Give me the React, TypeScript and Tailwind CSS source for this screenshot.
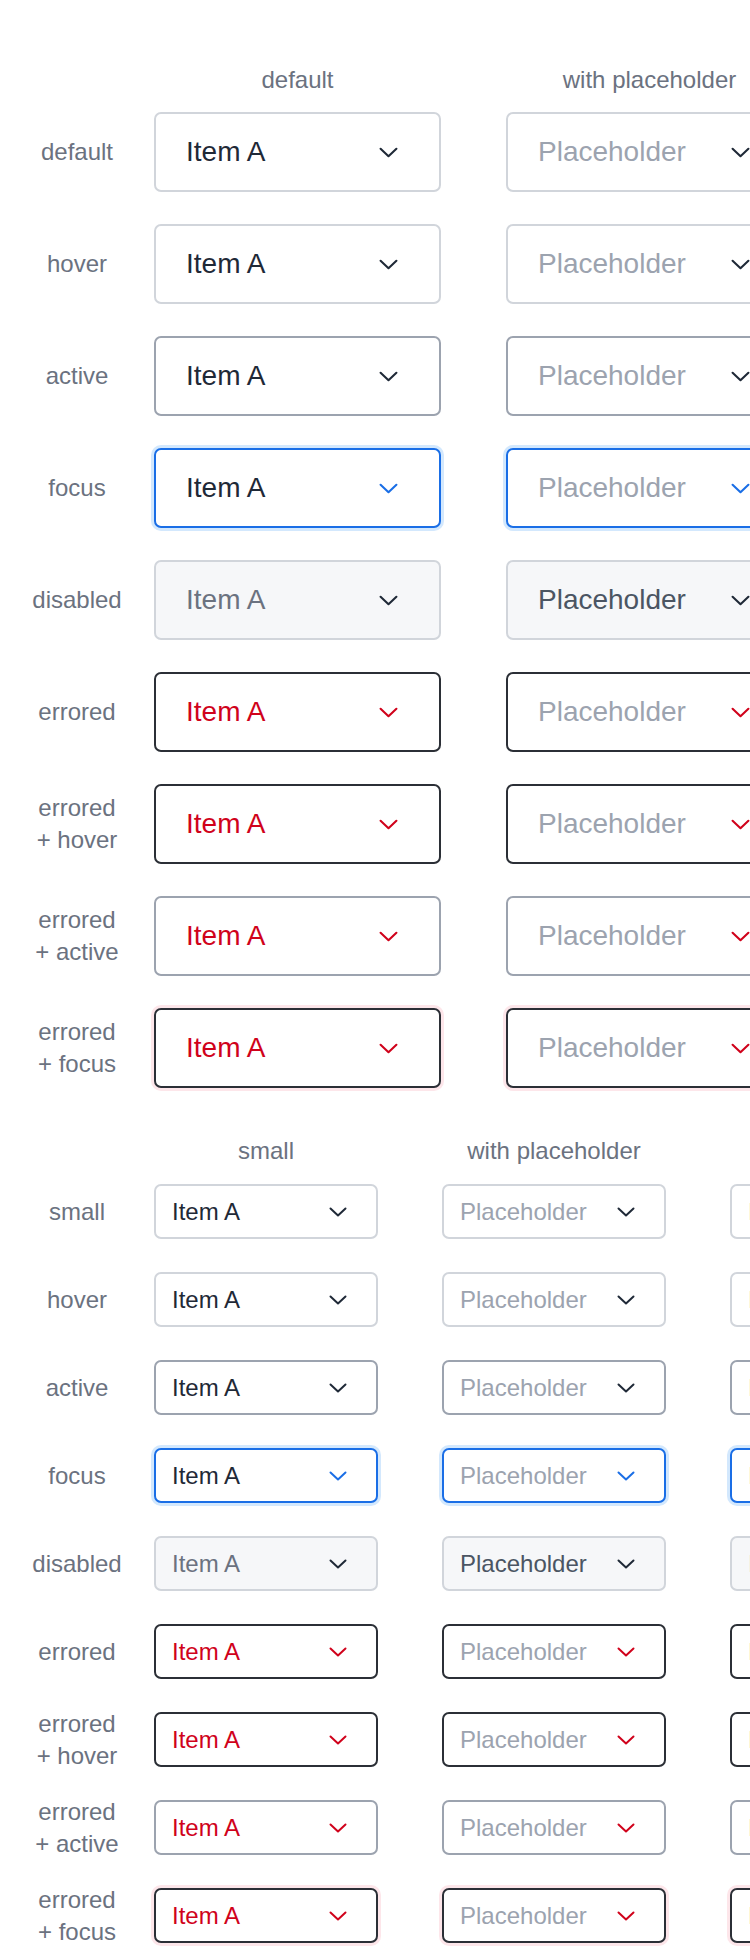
import React from "react";

type State =
  | "default"
  | "hover"
  | "active"
  | "focus"
  | "disabled"
  | "errored"
  | "errored-hover"
  | "errored-active"
  | "errored-focus";

const states: { state: State; label: string }[] = [
  { state: "default", label: "default" },
  { state: "hover", label: "hover" },
  { state: "active", label: "active" },
  { state: "focus", label: "focus" },
  { state: "disabled", label: "disabled" },
  { state: "errored", label: "errored" },
  { state: "errored-hover", label: "errored + hover" },
  { state: "errored-active", label: "errored + active" },
  { state: "errored-focus", label: "errored + focus" },
];

function boxClass(state: State) {
  switch (state) {
    case "active":
      return "border-[#9ca3af] bg-white";
    case "focus":
      return "border-[#1a6ee6] bg-white shadow-[0_0_0_3px_#d3e8fd]";
    case "disabled":
      return "border-[#d1d5db] bg-[#f6f7f9]";
    case "errored":
    case "errored-hover":
      return "border-[#2b2f36] bg-white";
    case "errored-active":
      return "border-[#9ca3af] bg-white";
    case "errored-focus":
      return "border-[#2b2f36] bg-white shadow-[0_0_0_3px_#fde6ea]";
    default:
      return "border-[#d1d5db] bg-white";
  }
}

function textClass(state: State, placeholder: boolean) {
  if (state === "disabled") return placeholder ? "text-[#4b5563]" : "text-[#6b7280]";
  if (placeholder) return "text-[#9ca3af]";
  if (state.startsWith("errored")) return "text-[#d0021b]";
  return "text-[#1f2937]";
}

function chevronColor(state: State) {
  if (state === "focus") return "#1a6ee6";
  if (state.startsWith("errored")) return "#d0021b";
  return "#1f2937";
}

function Chevron({ color, small }: { color: string; small?: boolean }) {
  return (
    <svg
      width={small ? 18 : 19}
      height={small ? 10 : 11}
      viewBox="0 0 18 10"
      fill="none"
      className="shrink-0"
    >
      <polyline
        points="1.5,1.5 9,8.5 16.5,1.5"
        stroke={color}
        strokeWidth="2"
        strokeLinecap="round"
        strokeLinejoin="round"
      />
    </svg>
  );
}

function SelectBox({
  state,
  placeholder,
  small,
}: {
  state: State;
  placeholder?: boolean;
  small?: boolean;
}) {
  return (
    <div
      className={
        "flex shrink-0 items-center justify-between rounded-[7px] border-2 " +
        boxClass(state) +
        (small
          ? " h-[55px] w-[224px] pl-[16px] pr-[29px]"
          : " h-[80px] w-[287px] pl-[30px] pr-[41px]")
      }
    >
      <span
        className={
          textClass(state, !!placeholder) +
          (small ? " text-[24px]" : " text-[28px]") +
          " whitespace-nowrap leading-none"
        }
      >
        {placeholder ? "Placeholder" : "Item A"}
      </span>
      <Chevron color={chevronColor(state)} small={small} />
    </div>
  );
}

function Section({
  small,
  headers,
  cols,
  firstLabel,
}: {
  small?: boolean;
  headers: string[];
  cols: boolean[];
  firstLabel: string;
}) {
  const w = small ? "w-[224px]" : "w-[287px]";
  return (
    <div className="flex flex-col">
      <div className="flex h-[32px] items-center">
        <div className="w-[154px] shrink-0" />
        <div className={"flex " + (small ? "gap-[64px]" : "gap-[65px]")}>
          {headers.map((h, i) => (
            <div key={i} className={w + " shrink-0 text-center text-[24px] leading-[32px] text-[#6b7280]"}>
              {h}
            </div>
          ))}
        </div>
      </div>
      <div className={"flex flex-col " + (small ? "mt-[17px] gap-[33px]" : "mt-[16px] gap-[32px]")}>
        {states.map((r, idx) => (
          <div key={r.state} className={"flex items-center " + (small ? "h-[55px]" : "h-[80px]")}>
            <div className="w-[154px] shrink-0 px-[30px] text-center text-[24px] leading-[32px] text-[#6b7280]">
              {idx === 0 ? firstLabel : r.label}
            </div>
            <div className={"flex " + (small ? "gap-[64px]" : "gap-[65px]")}>
              {cols.map((p, i) => (
                <SelectBox key={i} state={r.state} placeholder={p} small={small} />
              ))}
            </div>
          </div>
        ))}
      </div>
    </div>
  );
}

export default function App() {
  return (
    <div
      className="h-[1960px] w-[750px] overflow-hidden bg-white pt-[64px]"
      style={{ fontFamily: '"Liberation Sans", Arial, sans-serif' }}
    >
      <Section firstLabel="default" headers={["default", "with placeholder"]} cols={[false, true]} />
      <div className="mt-[47px]">
        <Section firstLabel="small" small headers={["small", "with placeholder", ""]} cols={[false, true, false]} />
      </div>
    </div>
  );
}
